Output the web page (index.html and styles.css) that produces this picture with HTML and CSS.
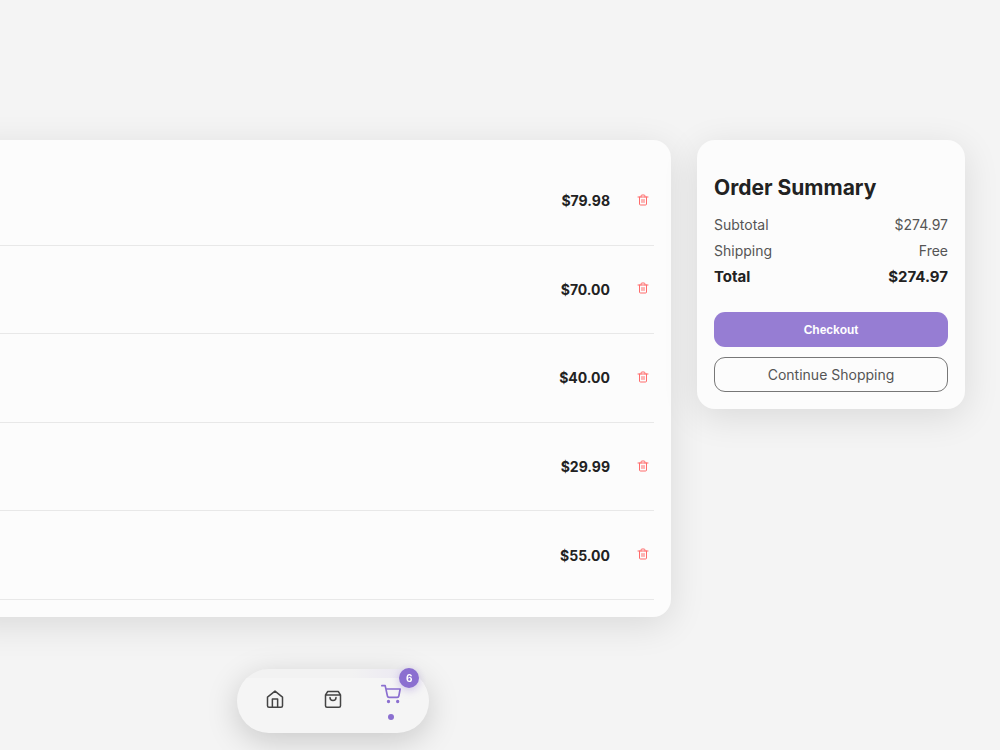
FILE: index.html
```html
<!DOCTYPE html>
<html lang="en">
<head>
    <meta charset="UTF-8">
    <meta name="viewport" content="width=device-width, initial-scale=1.0">
    <title>Cart</title>
    <link rel="stylesheet" href="styles.css">
</head>
<body>
    <svg class="sprite" aria-hidden="true">
        <symbol id="trash" viewBox="0 0 24 24">
            <path d="M2 6h20M19 6v14a2 2 0 0 1-2 2H7a2 2 0 0 1-2-2V6M8 6V4a2 2 0 0 1 2-2h4a2 2 0 0 1 2 2v2M10 11v6M14 11v6"/>
        </symbol>
    </svg>

    <main class="cart-page">
        <section class="card cart-items">
            <ul class="item-list">
                <li class="item">
                    <span class="price">$79.98</span>
                    <button class="remove" aria-label="Remove item"><svg><use href="#trash"/></svg></button>
                </li>
                <li class="item">
                    <span class="price">$70.00</span>
                    <button class="remove" aria-label="Remove item"><svg><use href="#trash"/></svg></button>
                </li>
                <li class="item">
                    <span class="price">$40.00</span>
                    <button class="remove" aria-label="Remove item"><svg><use href="#trash"/></svg></button>
                </li>
                <li class="item">
                    <span class="price">$29.99</span>
                    <button class="remove" aria-label="Remove item"><svg><use href="#trash"/></svg></button>
                </li>
                <li class="item">
                    <span class="price">$55.00</span>
                    <button class="remove" aria-label="Remove item"><svg><use href="#trash"/></svg></button>
                </li>
            </ul>
        </section>

        <aside class="card summary">
            <h2>Order Summary</h2>
            <div class="summary-row"><span>Subtotal</span><span>$274.97</span></div>
            <div class="summary-row"><span>Shipping</span><span>Free</span></div>
            <div class="summary-row total"><span>Total</span><span>$274.97</span></div>
            <button class="btn checkout">Checkout</button>
            <a class="btn continue" href="#">Continue Shopping</a>
        </aside>
    </main>

    <div class="dock-bar">
        <nav class="dock">
            <a class="dock-link" href="#" aria-label="Home">
                <svg viewBox="0 0 24 24"><path d="M2 9.500l10-8 10 8V21a2 2 0 0 1-2 2H4a2 2 0 0 1-2-2zM8.500 23V12h7v11"/></svg>
            </a>
            <a class="dock-link" href="#" aria-label="Shop">
                <svg viewBox="0 0 24 24"><path d="M2 6.500L5 2h14l3 4.500V21a2 2 0 0 1-2 2H4a2 2 0 0 1-2-2zM2 6.500h20M16 10a4 4 0 0 1-8 0"/></svg>
            </a>
            <a class="dock-link active" href="#" aria-label="Cart">
                <svg viewBox="0 0 24 24"><path d="M1 2h4l2.700 12.400a2 2 0 0 0 2 1.600h9.700a2 2 0 0 0 2-1.600L23 6H6"/><circle cx="9" cy="21" r="1"/><circle cx="20" cy="21" r="1"/></svg>
                <span class="badge">6</span>
            </a>
        </nav>
    </div>
</body>
</html>
```
FILE: styles.css
```css
* {
    box-sizing: border-box;
}
body {
    margin: 0;
    background: #f4f4f4;
    color: #222;
    font-family: Inter, sans-serif;
    font-size: 14px;
}
.sprite {
    display: none;
}
svg {
    display: block;
    fill: none;
    stroke: currentColor;
    stroke-width: 2;
    stroke-linecap: round;
    stroke-linejoin: round;
}
.cart-page {
    display: grid;
    grid-template-columns: 1fr 268px;
    align-items: start;
    gap: 26px;
    margin-left: -40px;
    padding: 140px 35px 130px 0;
}
.card {
    background: #fcfcfc;
    border-radius: 18px;
    padding: 17px;
    box-shadow: 0 8px 36px rgba(0, 0, 0, 0.11);
}

/* items */
.item-list {
    display: grid;
    grid-auto-rows: 1fr;
    min-height: 443px;
    margin: 0;
    padding: 0;
    list-style: none;
}
.item {
    display: flex;
    align-items: center;
    justify-content: flex-end;
    gap: 22px;
    border-bottom: 1px solid #e8e8e8;
}
.price {
    font-weight: 700;
}
.remove {
    display: flex;
    padding: 4px 5px 6px;
    border: 0;
    background: none;
    color: #ff6b6b;
    cursor: pointer;
}
.remove svg {
    width: 12px;
    height: 12px;
}

/* summary */
.summary h2 {
    margin: 17px 0 11px;
    font-size: 21px;
    line-height: 27px;
}
.summary-row {
    display: flex;
    justify-content: space-between;
    line-height: 26px;
    color: #555;
}
.summary-row.total {
    font-size: 15px;
    font-weight: 700;
    color: #222;
}
.btn {
    display: block;
    width: 100%;
    border-radius: 11px;
    text-align: center;
    text-decoration: none;
    cursor: pointer;
}
.checkout {
    height: 35px;
    margin: 22px 0 10px;
    border: 0;
    background: #967dd3;
    color: #fff;
    font-family: "Liberation Sans", Arial, sans-serif;
    font-size: 12px;
    font-weight: 700;
}
.continue {
    border: 1px solid #777;
    color: #555;
    line-height: 33px;
}

/* bottom navigation */
.dock-bar {
    position: fixed;
    right: 0;
    bottom: 17px;
    left: 0;
    display: grid;
    grid-template-columns: 2fr 1fr;
    pointer-events: none;
}
.dock {
    display: flex;
    justify-self: center;
    gap: 10px;
    padding: 8px 14px;
    border-radius: 32px;
    background: #f5f5f5 linear-gradient(90deg, #f2f2f2 60%, #ebe8f2 88%, #f2f2f2) no-repeat 0 0 / 100% 9px;
    box-shadow: 0 8px 32px rgba(0, 0, 0, 0.18);
    pointer-events: auto;
}
.dock-link {
    position: relative;
    display: flex;
    align-items: center;
    justify-content: center;
    width: 48px;
    height: 48px;
    padding-bottom: 4px;
    color: #444;
}
.dock-link svg {
    width: 18px;
    height: 18px;
}
.dock-link.active {
    padding-bottom: 14px;
    color: #8b6fd0;
}
.dock-link.active svg {
    width: 20px;
    height: 20px;
}
.dock-link.active::after {
    content: "";
    position: absolute;
    bottom: 5px;
    left: 21px;
    width: 6px;
    height: 6px;
    border-radius: 50%;
    background: #8b6fd0;
}
.badge {
    position: absolute;
    top: -9px;
    right: -4px;
    width: 20px;
    border-radius: 50%;
    background: #8b6fd0;
    box-shadow: 0 2px 8px rgba(139, 111, 208, 0.4);
    color: #fff;
    font-size: 10px;
    font-weight: 700;
    line-height: 20px;
    text-align: center;
}
```
